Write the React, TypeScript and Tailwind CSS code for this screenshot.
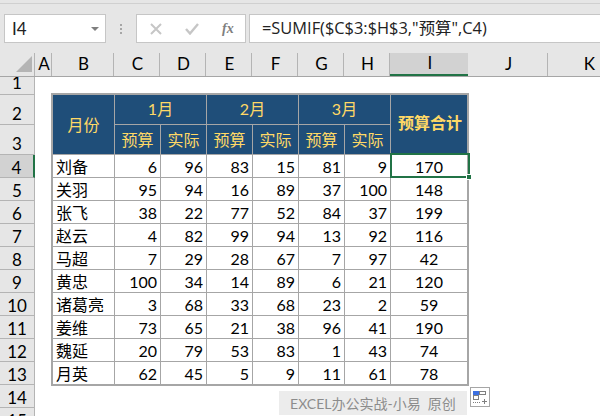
import React from "react";

const FONT = "font-['Lato','Noto_Sans_CJK_SC',sans-serif]";
const rows: [string, number, number, number, number, number, number, number][] = [
  ["刘备", 6, 96, 83, 15, 81, 9, 170],
  ["关羽", 95, 94, 16, 89, 37, 100, 148],
  ["张飞", 38, 22, 77, 52, 84, 37, 199],
  ["赵云", 4, 82, 99, 94, 13, 92, 116],
  ["马超", 7, 29, 28, 67, 7, 97, 42],
  ["黄忠", 100, 34, 14, 89, 6, 21, 120],
  ["诸葛亮", 3, 68, 33, 68, 23, 2, 59],
  ["姜维", 73, 65, 21, 38, 96, 41, 190],
  ["魏延", 20, 79, 53, 83, 1, 43, 74],
  ["月英", 62, 45, 5, 9, 11, 61, 78],
];
const cols: [string, string][] = [
  ["A", "w-[17px]"],
  ["B", "w-[62px]"],
  ["C", "w-[46px]"],
  ["D", "w-[46px]"],
  ["E", "w-[46px]"],
  ["F", "w-[46px]"],
  ["G", "w-[46px]"],
  ["H", "w-[46px]"],
  ["I", "w-[78px]"],
  ["J", "w-[80px]"],
  ["K", "w-[82px]"],
];
const rowHeads: [string, string][] = [
  ["1", "h-[18px] items-start leading-[11px]"],
  ["2", "h-[30px] items-end pb-[2px]"],
  ["3", "h-[30px] items-end pb-[2px]"],
  ["4", "h-[23px] items-center pt-[2px]"],
  ["5", "h-[23px] items-center pt-[2px]"],
  ["6", "h-[23px] items-center pt-[2px]"],
  ["7", "h-[23px] items-center pt-[2px]"],
  ["8", "h-[23px] items-center pt-[2px]"],
  ["9", "h-[23px] items-center pt-[2px]"],
  ["10", "h-[23px] items-center pt-[2px]"],
  ["11", "h-[23px] items-center pt-[2px]"],
  ["12", "h-[23px] items-center pt-[2px]"],
  ["13", "h-[23px] items-center pt-[2px]"],
  ["14", "h-[23px] items-center pt-[2px]"],
  ["15", "h-[23px] items-center pt-[2px]"],
];

const navy = "bg-[#1f4e79] text-[#ffd966] flex items-center justify-center border-b border-r border-[#a6a6a6]";

export default function App() {
  return (
    <div className={`relative w-[600px] h-[416px] overflow-hidden bg-white text-black ${FONT}`}>
      {/* ribbon strip + formula bar */}
      <div className="h-[53px] bg-[#e6e6e6] pt-[3px]">
        <div className="h-[11px] border-t border-[#d0d0d0]" />
        <div className="flex h-[29px] items-stretch">
          <div className="ml-1 flex w-[102px] items-center justify-between border border-[#c6c6c6] bg-white pl-[7px] pr-[6px] text-[17px] text-[#222]">
            <span>I4</span>
            <span className="h-0 w-0 border-x-[4px] border-t-[4px] border-x-transparent border-t-[#7f7f7f]" />
          </div>
          <div className="flex w-[30px] flex-col items-center justify-center gap-[2px]">
            <span className="h-[2px] w-[2px] bg-[#a6a6a6]" />
            <span className="h-[2px] w-[2px] bg-[#a6a6a6]" />
            <span className="h-[2px] w-[2px] bg-[#a6a6a6]" />
          </div>
          <div className="flex w-[110px] items-center border border-[#c6c6c6] bg-white">
            <svg width="12" height="12" viewBox="0 0 12 12" className="ml-[13px]">
              <path d="M1 1 L11 11 M11 1 L1 11" stroke="#c6c6c6" strokeWidth="2" fill="none" />
            </svg>
            <svg width="14" height="12" viewBox="0 0 14 12" className="ml-[23px]">
              <path d="M1 6 L5 10.5 L13 1" stroke="#c6c6c6" strokeWidth="2.4" fill="none" />
            </svg>
            <span className="ml-[23px] font-['Liberation_Serif',serif] text-[14px] font-bold italic text-[#7f7f7f]">fx</span>
          </div>
          <div className="ml-[3px] flex flex-1 items-center border-y border-l border-[#c6c6c6] bg-white pl-3 font-['Open_Sans','Noto_Sans_CJK_SC',sans-serif] text-[16.4px] text-[#222]">
            =SUMIF($C$3:$H$3,"预算",C4)
          </div>
        </div>
      </div>

      {/* column headers */}
      <div className="flex h-[24px] border-b border-[#a6a6a6] bg-[#e6e6e6] text-[17px]">
        <div className="relative w-[35px] shrink-0 border-r border-[#b4b4b4]">
          <span className="absolute bottom-[4px] right-[2px] h-0 w-0 border-b-[16px] border-l-[16px] border-b-[#b4b4b4] border-l-transparent" />
        </div>
        {cols.map(([c, w]) => (
          <div
            key={c}
            className={`${w} flex shrink-0 items-center justify-center pb-[2px] pl-[2px] ${
              c === "I"
                ? "border-b-2 border-[#217346] bg-[#d2d2d2]"
                : "border-r border-[#b4b4b4]"
            }`}
          >
            {c}
          </div>
        ))}
      </div>

      <div className="flex">
        {/* row headers */}
        <div className="w-[35px] bg-[#e6e6e6] text-[17px] leading-[17px]">
          {rowHeads.map(([r, h]) => (
            <div
              key={r}
              className={`${h} flex justify-center overflow-hidden border-b border-[#b4b4b4] ${
                r === "4" ? "border-r-2 border-r-[#217346] bg-[#d2d2d2]" : "border-r border-r-[#b4b4b4]"
              }`}
            >
              {r}
            </div>
          ))}
        </div>

        {/* table */}
        <div className="ml-4 mt-4 h-[293px] w-[418px] border-2 border-[#a6a6a6]">
          <div className="grid grid-cols-[62px_repeat(6,46px)_76px] grid-rows-[30px_30px_repeat(9,23px)_22px] text-[16px]">
            <div className={`${navy} row-span-2`}>月份</div>
            <div className={`${navy} col-span-2 pb-[2px]`}>1月</div>
            <div className={`${navy} col-span-2 pb-[2px]`}>2月</div>
            <div className={`${navy} col-span-2 pb-[2px]`}>3月</div>
            <div className={`${navy} row-span-2 border-r-0 pb-[4px] pl-[2px] font-bold`}>预算合计</div>
            {["预算", "实际", "预算", "实际", "预算", "实际"].map((t, i) => (
              <div key={i} className={navy}>
                {t}
              </div>
            ))}
            {rows.map((r, ri) =>
              r.map((v, ci) => {
                const bottom = ri < rows.length - 1 ? "border-b" : "";
                const right = ci < 7 ? "border-r" : "";
                const align = ci === 0 ? "justify-start pl-[3px]" : ci === 7 ? "justify-center" : "justify-end pr-[3px]";
                return (
                  <div key={`${ri}-${ci}`} className={`flex items-center pt-[2px] border-[#a6a6a6] ${bottom} ${right} ${align}`}>
                    {v}
                  </div>
                );
              })
            )}
          </div>
        </div>
      </div>

      {/* active cell I4 */}
      <div className="absolute left-[390px] top-[153px] h-[25px] w-[80px] border-2 border-[#217346]" />
      <div className="absolute left-[466px] top-[174px] h-[6px] w-[6px] border border-white bg-[#217346]" />

      {/* watermark */}
      <div className="absolute left-[279px] top-[391px] flex h-[24px] w-[188px] items-center justify-center whitespace-pre bg-[#ececec] text-[14px] text-[#8c8c8c]">
        EXCEL办公实战-小易  原创
      </div>

      {/* paste options */}
      <div className="absolute left-[470px] top-[387px] h-[20px] w-[20px] border border-[#a6a6a6] bg-white">
        <svg width="18" height="18" viewBox="0 0 18 18" className="block">
          <rect x="2" y="3" width="6" height="4" fill="#3b6fe0" />
          <rect x="8.5" y="3.5" width="6" height="3" fill="none" stroke="#7f7f7f" />
          <rect x="2.5" y="7.5" width="5" height="4" fill="none" stroke="#7f7f7f" />
          <path d="M2 14.5 H10" stroke="#7f7f7f" strokeDasharray="1 1" />
          <path d="M11 13.5 H16 M13.5 11 V16" stroke="#7f7f7f" />
        </svg>
      </div>
    </div>
  );
}
